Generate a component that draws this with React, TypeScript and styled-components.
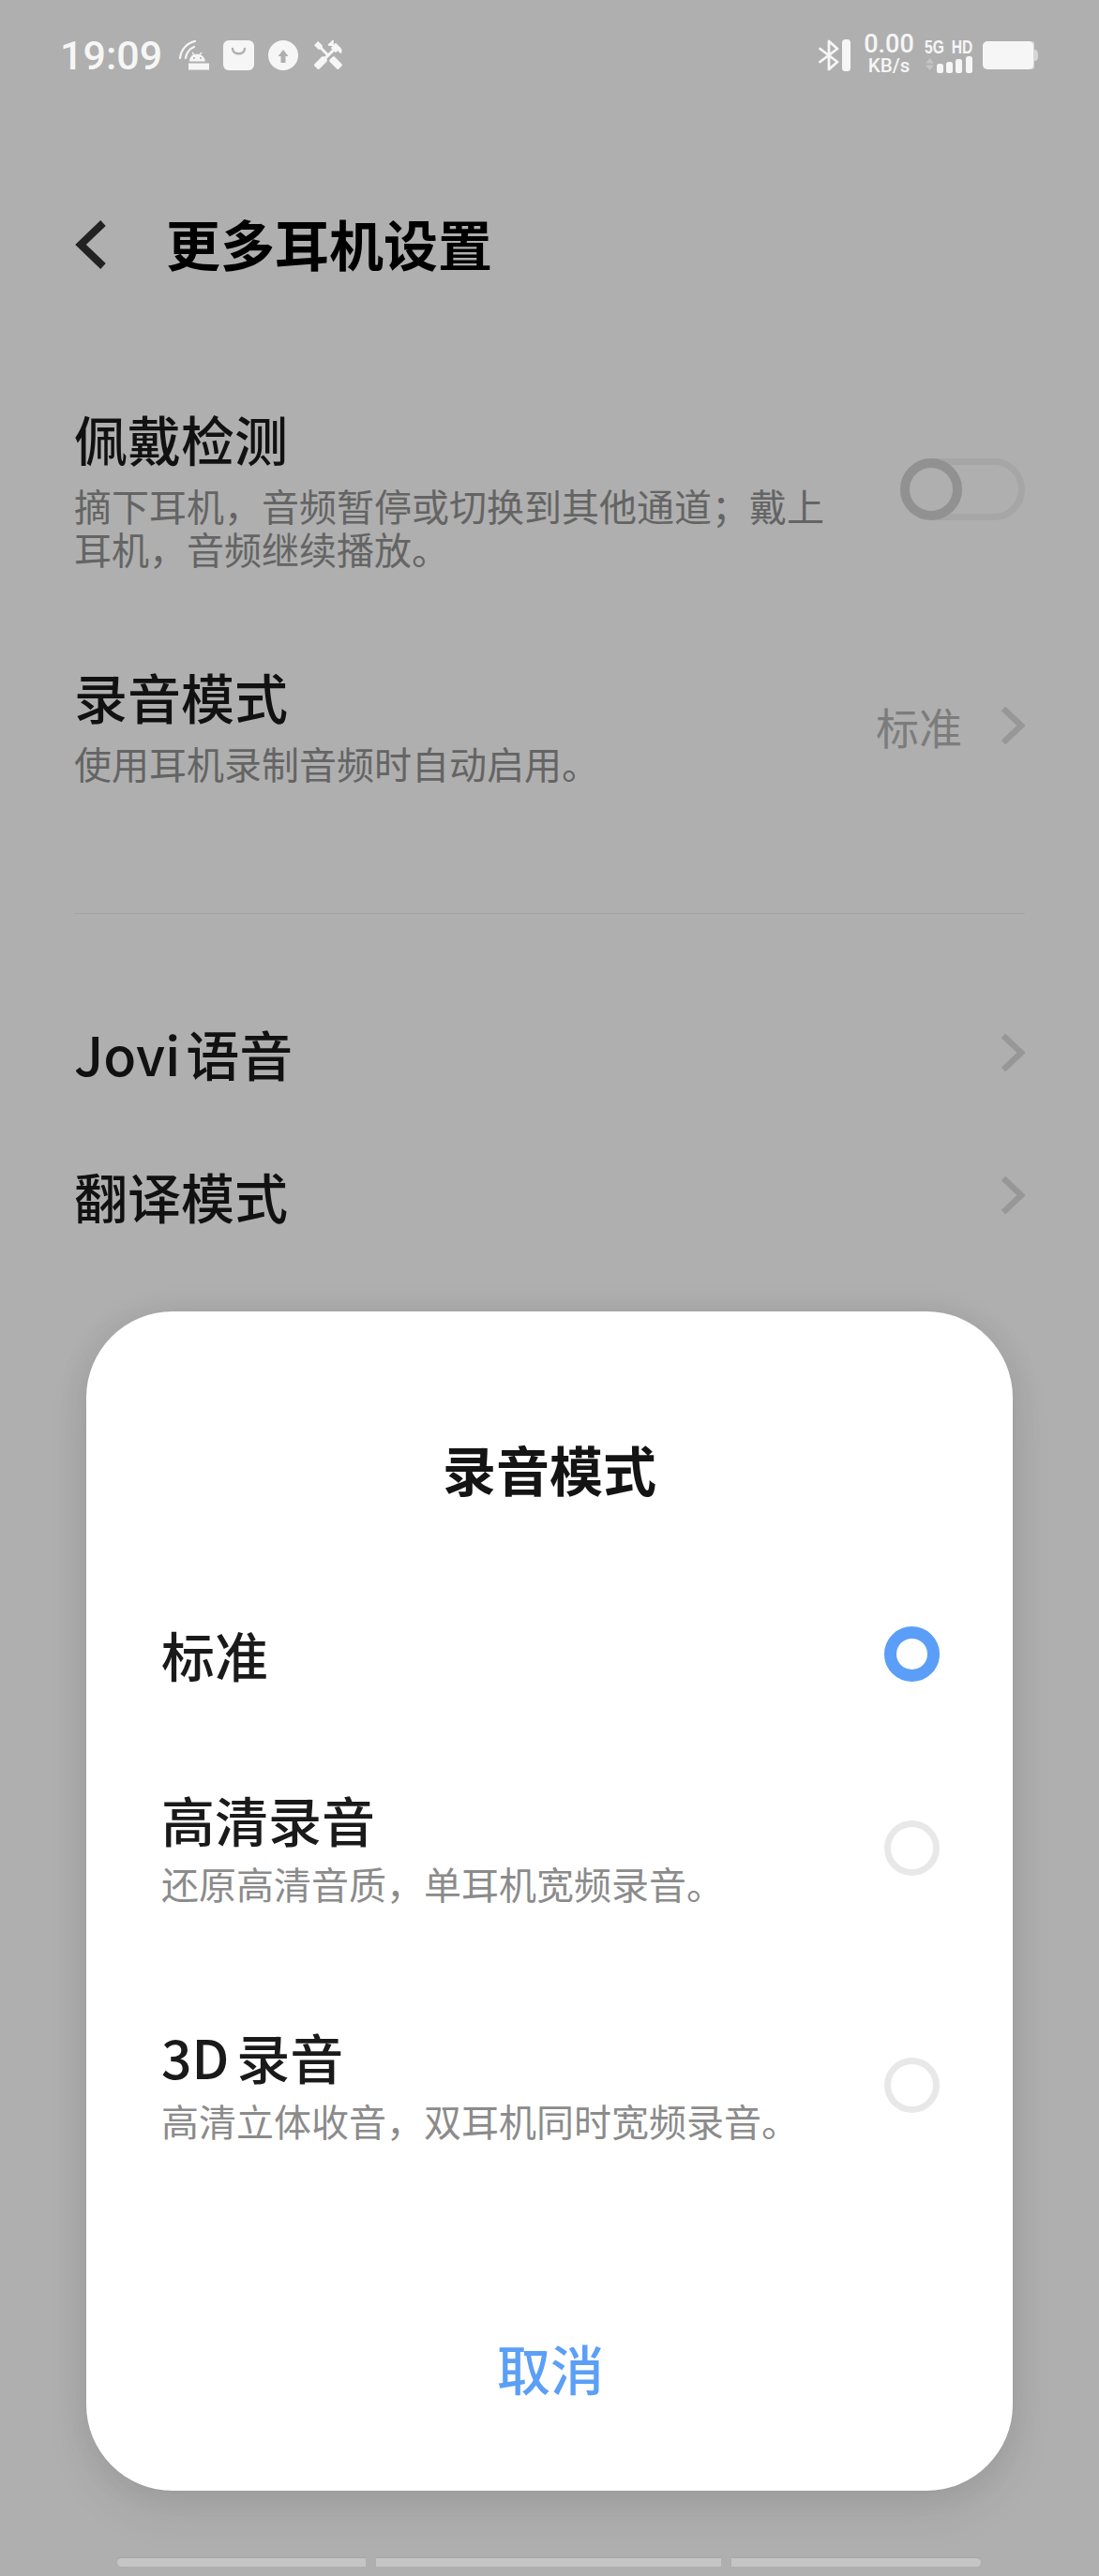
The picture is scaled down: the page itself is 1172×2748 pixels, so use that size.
import React from 'react';
import styled, { createGlobalStyle } from 'styled-components';
import { MdHandyman } from 'react-icons/md';

const GlobalStyle = createGlobalStyle`
  html, body {
    margin: 0;
    padding: 0;
    background: #afafaf;
  }
  *, *::before, *::after {
    box-sizing: border-box;
  }
`;

const Page = styled.div`
  position: relative;
  width: 1172px;
  height: 2748px;
  overflow: hidden;
  display: flex;
  flex-direction: column;
  background: #afafaf;
  font-family: 'Noto Sans CJK SC', 'Noto Sans', sans-serif;
`;

const StatusBar = styled.div`
  height: 116px;
  padding: 38px 65px 0 64px;
  display: flex;
  justify-content: space-between;
  align-items: flex-start;
  color: #f6f6f6;
`;

const StatusGroup = styled.div`
  display: flex;
  align-items: center;
  height: 42px;
`;

const Clock = styled.span`
  font-family: Roboto, 'Noto Sans', sans-serif;
  font-size: 43px;
  font-weight: 500;
  line-height: 42px;
  margin-right: 17px;
`;

const StatusIcon = styled.svg<{ $gap?: number }>`
  display: block;
  flex: none;
  margin-right: ${({ $gap }) => $gap ?? 0}px;
`;

const ToolsIcon = styled(MdHandyman)`
  display: block;
  flex: none;
  width: 36px;
  height: 36px;
  margin-left: -2px;
`;

const Speed = styled.div`
  width: 54px;
  margin: 0 12px 0 14px;
  font-family: Roboto, 'Noto Sans', sans-serif;
  text-align: center;
  font-weight: 500;
`;

const SpeedValue = styled.div`
  font-size: 27px;
  line-height: 23px;
`;

const SpeedUnit = styled.div`
  font-size: 20.5px;
  line-height: 23px;
`;

const Network = styled.div`
  width: 50px;
  margin-right: 11px;
`;

const NetworkLabels = styled.div`
  display: flex;
  justify-content: space-between;
  width: 64px;
  margin-left: -1px;
  font-family: 'Liberation Sans', sans-serif;
  font-weight: 700;
  font-size: 19.5px;
  line-height: 20px;
  transform: scaleX(0.8);
  transform-origin: left center;
`;

const NavBar = styled.header`
  margin: 90px 79px 0 80px;
  height: 110px;
  display: flex;
  align-items: center;
`;

const PageTitle = styled.h1`
  margin: 0 0 4px 64px;
  font-size: 58px;
  line-height: 64px;
  font-weight: 700;
  color: #000;
`;

const Row = styled.div<{ $top: number }>`
  margin: ${({ $top }) => $top}px 79px 0;
  display: flex;
  align-items: center;
  justify-content: space-between;
`;

const RowText = styled.div`
  width: 810px;
`;

const RowTitle = styled.div`
  font-size: 57px;
  line-height: 64px;
  font-weight: 500;
  word-spacing: -7px;
  color: #111;
`;

const RowHint = styled.div`
  margin-top: 17px;
  font-size: 40px;
  line-height: 46px;
  color: #646464;
`;

const RowSide = styled.div`
  display: flex;
  align-items: center;
`;

const RowValue = styled.span`
  font-size: 46px;
  line-height: 50px;
  color: #7c7c7c;
  margin-right: 41px;
`;

const Toggle = styled.div`
  position: relative;
  width: 133px;
  height: 66px;
  border: 7px solid #a6a6a6;
  border-radius: 33px;

  &::before {
    content: '';
    position: absolute;
    left: -7px;
    top: -7px;
    width: 66px;
    height: 66px;
    border: 10px solid #919191;
    border-radius: 50%;
    background: #afafaf;
  }
`;

const Divider = styled.hr<{ $top: number }>`
  margin: ${({ $top }) => $top}px 79px 0;
  border: 0;
  height: 1px;
  background: #a3a3a3;
`;

const Chevron = styled.svg`
  display: block;
  flex: none;
`;

const Dialog = styled.section`
  position: absolute;
  left: 92px;
  top: 1399px;
  width: 988px;
  height: 1258px;
  display: flex;
  flex-direction: column;
  align-items: stretch;
  padding: 132px 78px 100px 80px;
  background: #fff;
  border-radius: 92px;
  box-shadow: 0 24px 50px rgba(0, 0, 0, 0.07), 0 0 34px rgba(0, 0, 0, 0.08);

  &::before {
    content: '';
    position: absolute;
    z-index: -1;
    left: -13px;
    right: -13px;
    top: 30px;
    height: 258px;
    border-radius: 16px;
    background: rgba(0, 0, 0, 0.05);
  }
`;

const DialogTitle = styled.h2`
  margin: 0 0 0 -2px;
  text-align: center;
  font-size: 57px;
  line-height: 70px;
  font-weight: 700;
  color: #141414;
`;

const Option = styled.div<{ $top: number }>`
  margin-top: ${({ $top }) => $top}px;
  display: flex;
  align-items: center;
  justify-content: space-between;
`;

const OptionTitle = styled.div`
  font-size: 57px;
  line-height: 64px;
  font-weight: 500;
  word-spacing: -5px;
  color: #1a1a1a;
`;

const OptionHint = styled.div`
  margin-top: 14px;
  font-size: 40px;
  line-height: 46px;
  color: #8b8b8b;
`;

const Radio = styled.span<{ $checked?: boolean }>`
  display: block;
  flex: none;
  width: 59px;
  height: 59px;
  margin-top: ${({ $checked }) => ($checked ? 0 : 3)}px;
  border-radius: 50%;
  border: ${({ $checked }) => ($checked ? '13px solid #5a9ef8' : '7px solid #e8e8e8')};
  background: #fff;
`;

const Cancel = styled.button`
  margin-top: auto;
  padding: 0;
  border: 0;
  background: none;
  font-family: inherit;
  font-size: 57px;
  line-height: 64px;
  font-weight: 500;
  color: #5b9ff6;
`;

const GestureBar = styled.div`
  margin: auto 125px 10px;
  display: grid;
  grid-template-columns: 265px 368px 266px;
  column-gap: 11px;
`;

const GesturePill = styled.span<{ $round?: 'left' | 'right' }>`
  height: 9px;
  background: #c5c5c5;
  box-shadow: 0 -1px 1px #a6a6a6;
  border-radius: ${({ $round }) =>
    $round === 'left' ? '5px 0 0 5px' : $round === 'right' ? '0 5px 5px 0' : '0'};
`;

const RightArrow = () => (
  <Chevron width="26" height="40" viewBox="0 0 26 40">
    <path d="M3 2 L22 20 L3 38" fill="none" stroke="#979797" strokeWidth="6.5" />
  </Chevron>
);

const AndroidWifi = () => (
  <StatusIcon width="33" height="32" viewBox="0 0 33 32" $gap={15}>
    <path d="M2 19 C3 10 9 3 18 1" fill="none" stroke="currentColor" strokeWidth="2.2" strokeLinecap="round" />
    <path d="M8 19 C8.5 14 12 9 17 7" fill="none" stroke="currentColor" strokeWidth="2.2" strokeLinecap="round" />
    <path d="M12 22.5 C12 18.5 14 16.5 16 15.5 L14.5 13 L15.5 12.5 L17.5 15 C19 14.5 21 14.5 22.5 15 L24.5 12.5 L25.5 13 L24 15.5 C26 16.5 28.5 18.5 29 22.5 Z" fill="currentColor" />
    <circle cx="17" cy="19" r="1.1" fill="#afafaf" />
    <circle cx="24" cy="19" r="1.1" fill="#afafaf" />
    <rect x="11" y="24.5" width="22" height="7" fill="currentColor" />
  </StatusIcon>
);

const StoreBag = () => (
  <StatusIcon width="33" height="32" viewBox="0 0 33 32" $gap={15}>
    <rect width="33" height="32" rx="6" fill="currentColor" />
    <path d="M10 9 C10.5 16 22.5 16 23 9" fill="none" stroke="#afafaf" strokeWidth="2.4" strokeLinecap="round" />
  </StatusIcon>
);

const UploadBadge = () => (
  <StatusIcon width="32" height="32" viewBox="0 0 32 32" $gap={16}>
    <circle cx="16" cy="16" r="16" fill="currentColor" />
    <path d="M16 10 L21.5 17 L18.5 17 L18.5 24 L13.5 24 L13.5 17 L10.5 17 Z" fill="#afafaf" />
  </StatusIcon>
);

const BluetoothBar = () => (
  <StatusIcon width="34" height="34" viewBox="0 0 34 34">
    <path d="M1.5 10 L20 24 L11 32 L11 2 L20 10 L1.5 24" fill="none" stroke="currentColor" strokeWidth="2.8" strokeLinecap="round" strokeLinejoin="round" />
    <rect x="25" y="0" width="9" height="34" rx="3.5" fill="currentColor" />
  </StatusIcon>
);

const SignalBars = () => (
  <StatusIcon width="50" height="18" viewBox="0 0 50 18">
    <path d="M0 7.5 L4.5 2 L9 7.5 Z M0 9.5 L9 9.5 L4.5 15 Z" fill="#c4c4c4" />
    <rect x="12" y="8" width="7" height="10" rx="2.5" fill="currentColor" />
    <rect x="22" y="6" width="7" height="12" rx="2.5" fill="currentColor" />
    <rect x="32" y="3" width="7" height="15" rx="2.5" fill="currentColor" />
    <rect x="43" y="0" width="7" height="18" rx="2.5" fill="currentColor" />
  </StatusIcon>
);

const Battery = () => (
  <StatusIcon width="59" height="30" viewBox="0 0 59 30">
    <path d="M50 0 H52 C54 0 55 1 55 3 V9 H56 C58 9 59 11 59 15 C59 19 58 21 56 21 H55 V27 C55 29 54 30 52 30 H50 Z" fill="#d6d6d6" />
    <rect width="54" height="30" rx="5" fill="currentColor" />
  </StatusIcon>
);

const App: React.FC = () => {
  return (
    <>
      <GlobalStyle />
      <Page>
        <StatusBar>
          <StatusGroup>
            <Clock>19:09</Clock>
            <AndroidWifi />
            <StoreBag />
            <UploadBadge />
            <ToolsIcon />
          </StatusGroup>
          <StatusGroup>
            <BluetoothBar />
            <Speed>
              <SpeedValue>0.00</SpeedValue>
              <SpeedUnit>KB/s</SpeedUnit>
            </Speed>
            <Network>
              <NetworkLabels>
                <span>5G</span>
                <span>HD</span>
              </NetworkLabels>
              <SignalBars />
            </Network>
            <Battery />
          </StatusGroup>
        </StatusBar>

        <NavBar>
          <Chevron width="33" height="52" viewBox="0 0 33 52">
            <path d="M30 3 L6 26 L30 49" fill="none" stroke="#222" strokeWidth="8" />
          </Chevron>
          <PageTitle>更多耳机设置</PageTitle>
        </NavBar>

        <Row $top={119}>
          <RowText>
            <RowTitle>佩戴检测</RowTitle>
            <RowHint>摘下耳机，音频暂停或切换到其他通道；戴上耳机，音频继续播放。</RowHint>
          </RowText>
          <Toggle />
        </Row>

        <Row $top={102}>
          <RowText>
            <RowTitle>录音模式</RowTitle>
            <RowHint>使用耳机录制音频时自动启用。</RowHint>
          </RowText>
          <RowSide>
            <RowValue>标准</RowValue>
            <RightArrow />
          </RowSide>
        </Row>

        <Divider $top={137} />

        <Row $top={116}>
          <RowTitle>Jovi 语音</RowTitle>
          <RightArrow />
        </Row>

        <Row $top={88}>
          <RowTitle>翻译模式</RowTitle>
          <RightArrow />
        </Row>

        <GestureBar>
          <GesturePill $round="left" />
          <GesturePill />
          <GesturePill $round="right" />
        </GestureBar>

        <Dialog>
          <DialogTitle>录音模式</DialogTitle>

          <Option $top={131}>
            <OptionTitle>标准</OptionTitle>
            <Radio $checked />
          </Option>

          <Option $top={112}>
            <div>
              <OptionTitle>高清录音</OptionTitle>
              <OptionHint>还原高清音质，单耳机宽频录音。</OptionHint>
            </div>
            <Radio />
          </Option>

          <Option $top={129}>
            <div>
              <OptionTitle>3D 录音</OptionTitle>
              <OptionHint>高清立体收音，双耳机同时宽频录音。</OptionHint>
            </div>
            <Radio />
          </Option>

          <Cancel>取消</Cancel>
        </Dialog>
      </Page>
    </>
  );
};

export default App;
